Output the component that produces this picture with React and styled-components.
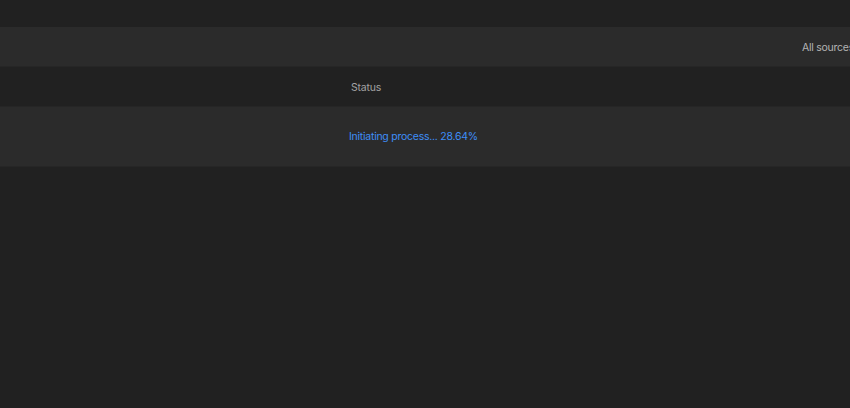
import React from "react";
import styled, { createGlobalStyle } from "styled-components";

const Global = createGlobalStyle`
  html, body { margin: 0; padding: 0; background: #212121; overflow: hidden; }
  body { font-family: Inter, "Noto Sans", sans-serif; width: 850px; height: 408px; }
  #root { width: 850px; overflow: hidden; }
`;

const Page = styled.div`
  width: 900px;
  padding-top: 27px;
`;

const Toolbar = styled.div`
  height: 39px;
  background: #2b2b2b;
  border-bottom: 1px solid #262626;
  display: flex;
  align-items: center;
  justify-content: flex-end;
  padding-right: 46px;
`;

const Filter = styled.span`
  font-size: 10.5px;
  letter-spacing: -0.25px;
  color: #b4b4b4;
  white-space: nowrap;
  padding-top: 1px;
`;

const Table = styled.div`
  display: flex;
  flex-direction: column;
`;

const Row = styled.div`
  display: grid;
  grid-template-columns: 339px 1fr;
  align-items: center;
  height: ${(p) => p.$h}px;
  background: ${(p) => p.$bg};
  border-bottom: 1px solid #262626;
`;

const HeadCell = styled.div`
  font-size: 10.5px;
  letter-spacing: -0.2px;
  color: #a3a3a3;
  padding-left: 12px;
  padding-top: 1px;
`;

const Cell = styled.div`
  font-size: 10.5px;
  letter-spacing: -0.25px;
  color: #3e8ef7;
  padding-left: 10px;
`;

export default function App() {
  return (
    <>
      <Global />
      <Page>
        <Toolbar>
          <Filter>All sources</Filter>
        </Toolbar>
        <Table>
          <Row $h={39} $bg="#212121">
            <div />
            <HeadCell>Status</HeadCell>
          </Row>
          <Row $h={59} $bg="#2b2b2b">
            <div />
            <Cell>Initiating process... 28.64%</Cell>
          </Row>
        </Table>
      </Page>
    </>
  );
}
